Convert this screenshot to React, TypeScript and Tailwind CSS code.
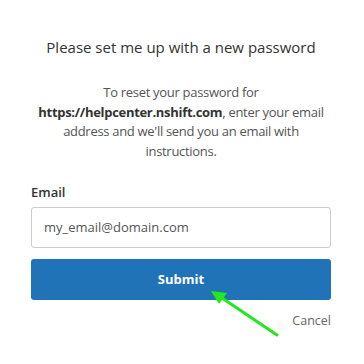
export default function App() {
  return (
    <div
      className="relative w-[364px] h-[364px] bg-white overflow-hidden"
      style={{ fontFamily: '"Open Sans", "Noto Sans", sans-serif' }}
    >
      <div className="flex flex-col pl-[31px] pr-[33px] pt-[36px]">
        <h1 className="text-center text-[15px] leading-[22px] text-[#333]">
          Please set me up with a new password
        </h1>

        <p className="mt-[25px] text-center text-[13px] leading-[19.7px] tracking-[-0.3px] text-[#555]">
          To reset your password for
          <br />
          <strong className="font-bold text-[#333]">https://helpcenter.nshift.com</strong>, enter your email
          <br />
          address and we'll send you an email with
          <br />
          instructions.
        </p>

        <label className="mt-[20px] text-[13px] leading-[20px] font-semibold text-[#333]">Email</label>

        <input
          type="email"
          placeholder="my_email@domain.com"
          className="mt-[5px] h-[41px] w-full rounded-[3px] border border-[#ccc] px-[12px] text-[13px] text-[#555] placeholder:text-[#555] outline-none"
        />

        <button className="mt-[11px] h-[41px] w-full rounded-[3px] bg-[#2073b7] text-[13px] font-bold text-white">
          Submit
        </button>

        <div className="mt-[11px] flex justify-end">
          <a className="text-[12.5px] leading-[20px] text-[#666]">Cancel</a>
        </div>
      </div>

      {/* green annotation arrow */}
      <svg className="absolute left-0 top-0" width="364" height="364" viewBox="0 0 364 364">
        <line x1="277" y1="335" x2="222" y2="298" stroke="#22e81c" strokeWidth="3" strokeLinecap="round" />
        <polygon points="211,291 227,293 219,304" fill="#22e81c" />
      </svg>
    </div>
  );
}
